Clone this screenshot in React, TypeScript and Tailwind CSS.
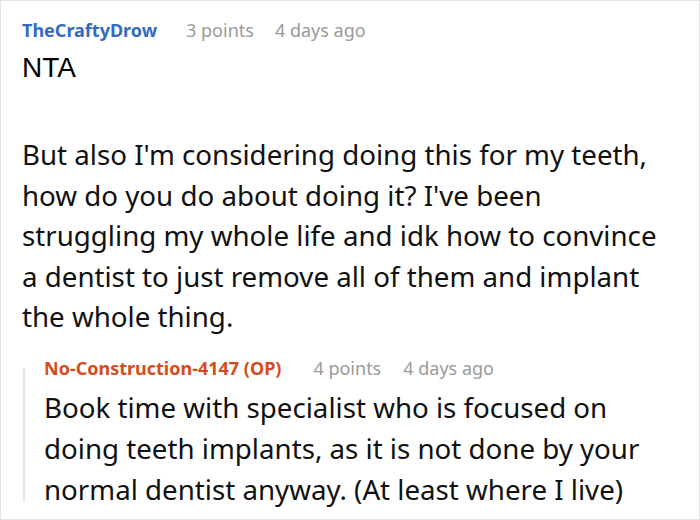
export default function App() {
  const sans = { fontFamily: '"Noto Sans", "Open Sans", sans-serif' }
  return (
    <div className="w-[700px] h-[520px] overflow-hidden bg-white border border-[#e2e2e2] pl-[21px] pr-2" style={sans}>
      <div className="flex items-baseline pt-[15px] text-[18px] leading-[28px]">
        <span className="font-bold text-[#336bbf]">TheCraftyDrow</span>
        <span className="ml-[29px] text-[#9a9a9a]">3 points</span>
        <span className="ml-[21px] text-[#9a9a9a]">4 days ago</span>
      </div>
      <p className="mt-[7px] text-[28px] leading-[34px] text-black font-['Liberation_Sans',sans-serif]">NTA</p>
      <p className="mt-[49px] text-[27.7px] leading-[40.5px] text-[#111]">
        But also I'm considering doing this for my teeth,
        <br />
        how do you do about doing it? I've been
        <br />
        struggling my whole life and idk how to convince
        <br />
        a dentist to just remove all of them and implant
        <br />
        the whole thing.
      </p>
      <div className="mt-[17px] ml-[1px] flex">
        <div className="w-[2px] mt-[14px] mb-[8px] bg-[#e4e4e4]" />
        <div className="pl-[19px]">
          <div className="flex items-baseline text-[18px] leading-[28px]">
            <span className="font-bold text-[#d54c1c]">No-Construction-4147 (OP)</span>
            <span className="ml-[32px] text-[#9a9a9a]">4 points</span>
            <span className="ml-[22px] text-[#9a9a9a]">4 days ago</span>
          </div>
          <p className="mt-[5px] text-[27.7px] leading-[41px] text-[#111]">
            Book time with specialist who is focused on
            <br />
            doing teeth implants, as it is not done by your
            <br />
            normal dentist anyway. (At least where I live)
          </p>
        </div>
      </div>
    </div>
  )
}
